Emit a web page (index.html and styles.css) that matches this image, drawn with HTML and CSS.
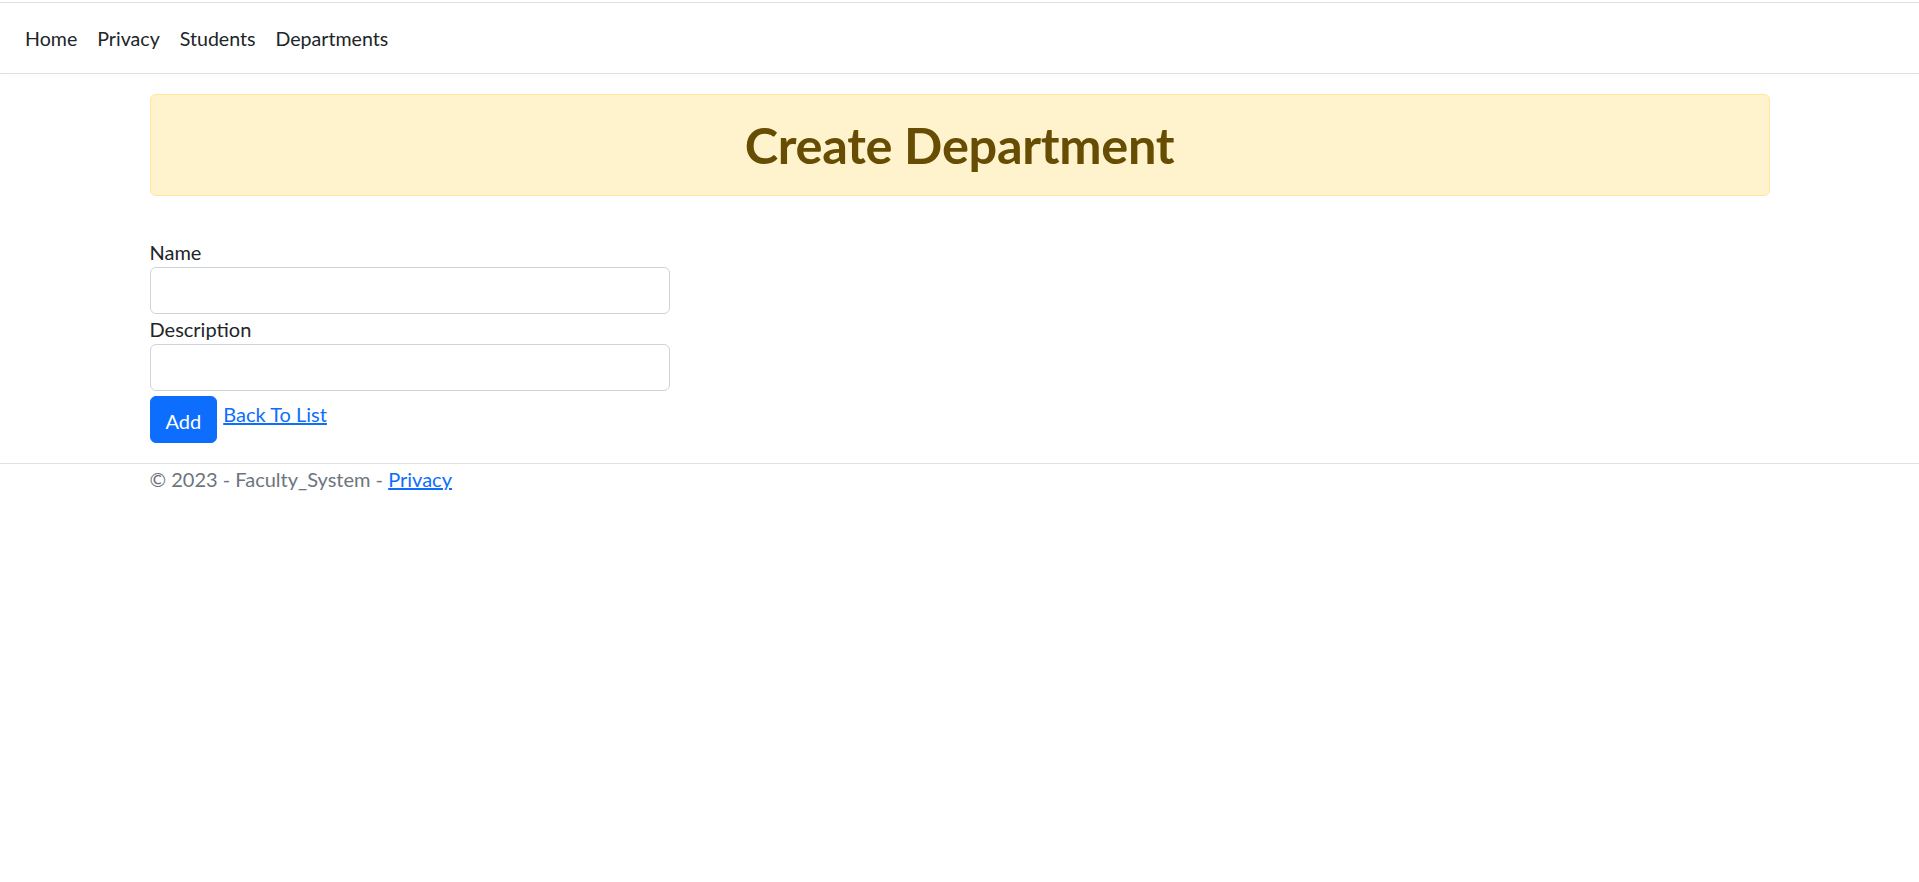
FILE: index.html
```html
<!DOCTYPE html>
<html lang="en">
<head>
<meta charset="utf-8">
<title>Create Department - Faculty_System</title>
<link rel="stylesheet" href="styles.css">
</head>
<body>
<header class="site-header">
  <nav class="navbar">
    <ul class="nav-list">
      <li><a class="nav-link" href="#">Home</a></li>
      <li><a class="nav-link" href="#">Privacy</a></li>
      <li><a class="nav-link" href="#">Students</a></li>
      <li><a class="nav-link" href="#">Departments</a></li>
    </ul>
  </nav>
</header>
<div class="container">
  <main class="main">
    <div class="alert">
      <h1 class="alert-title">Create Department</h1>
    </div>
    <form class="dept-form">
      <label class="form-label" for="name">Name</label>
      <input class="form-control" id="name" type="text">
      <label class="form-label" for="desc">Description</label>
      <input class="form-control" id="desc" type="text">
      <div class="form-actions">
        <button class="btn-primary" type="button">Add</button>
        <a class="back-link" href="#">Back To List</a>
      </div>
    </form>
  </main>
</div>
<footer class="footer">
  <div class="container">&copy; 2023 - Faculty_System - <a class="footer-link" href="#">Privacy</a></div>
</footer>
</body>
</html>
```

FILE: styles.css
```css
* { box-sizing: border-box; }
html, body { margin: 0; padding: 0; }
body {
  font-family: Lato, "Open Sans", sans-serif;
  font-size: 20px;
  line-height: 30px;
  color: #212529;
  background: #fff;
  padding-top: 2px;
}
.site-header {
  border-top: 1px solid #e0e0e0;
  margin-bottom: 20px;
}
.navbar {
  padding: 10px 15px;
  border-bottom: 1px solid #dee2e6;
  box-shadow: 0 2px 4px rgba(0, 0, 0, 0.02);
}
.nav-list { list-style: none; margin: 0; padding: 0; display: flex; }
.nav-link {
  display: block;
  padding: 10px;
  color: #212529;
  text-decoration: none;
  font-size: 19.6px;
  padding-top: 11px;
  padding-bottom: 9px;
}
.container { max-width: 1620px; margin: 0 auto; }
.main { padding-bottom: 20px; }
.alert {
  padding: 20px;
  background: #fff3cd;
  border: 1px solid #ffe69c;
  border-radius: 6px;
  color: #664d03;
  margin-bottom: 41px;
}
.alert-title {
  margin: 0;
  font-size: 50.5px;
  line-height: 60px;
  font-weight: 700;
  letter-spacing: -0.3px;
  text-align: center;
}
.dept-form { display: flex; flex-direction: column; align-items: flex-start; }
.form-label { display: block; }
.form-control {
  display: block;
  width: 520px;
  height: 47px;
  border: 1px solid #ced4da;
  border-radius: 6px;
  font: inherit;
  padding: 0 15px;
}
.form-actions { display: flex; align-items: flex-start; gap: 6px; margin-top: 5px; }
.btn-primary {
  background: #0d6efd;
  color: #fff;
  border: 1px solid #0d6efd;
  border-radius: 6px;
  height: 47px;
  padding: 2px 15px 0;
  font: inherit;
  line-height: 30px;
}
.back-link { color: #0d6efd; margin-top: 3px; }
.footer { border-top: 1px solid #dee2e6; color: #6c757d; }
.footer-link { color: #0d6efd; }
```
